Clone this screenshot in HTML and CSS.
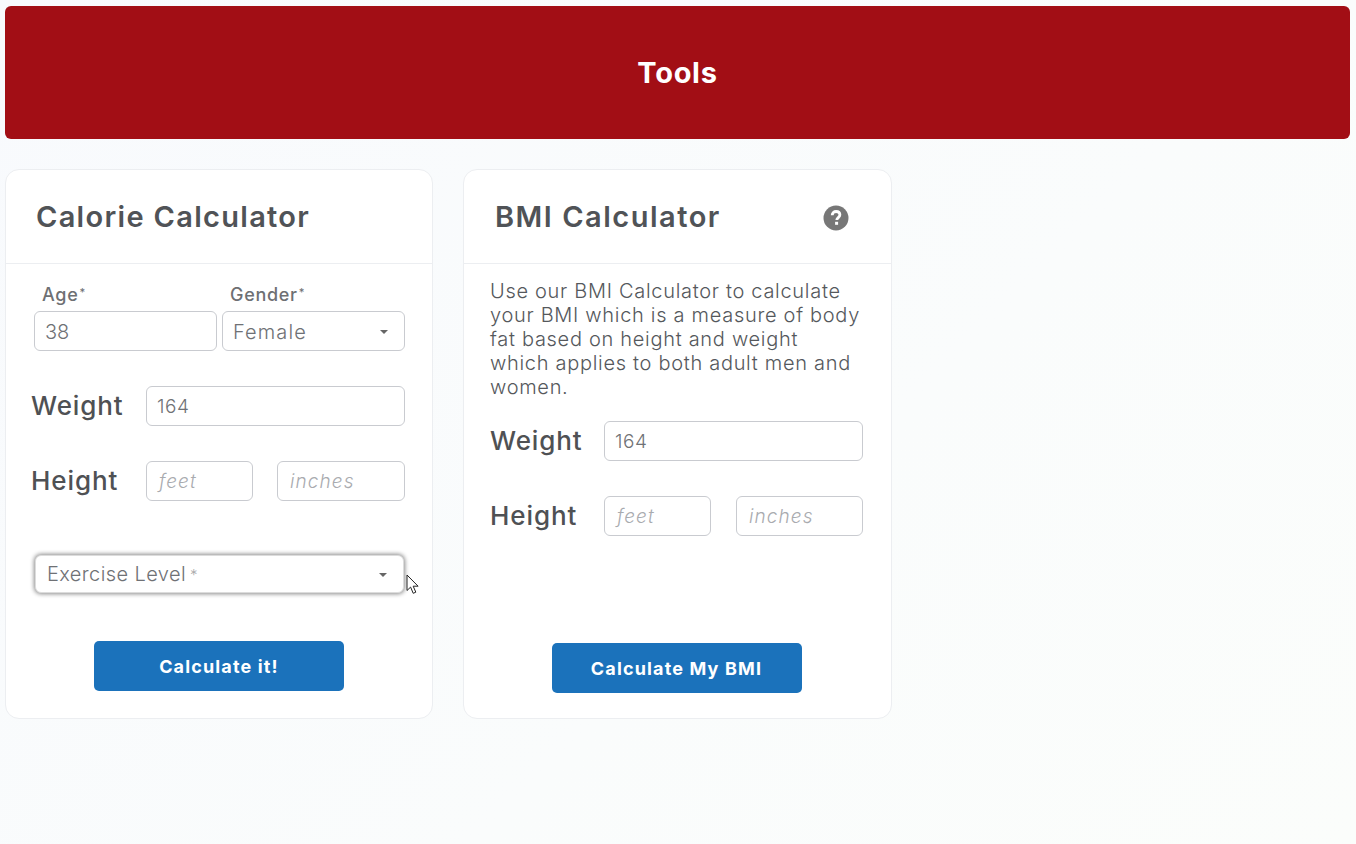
FILE: index.html
```html
<!DOCTYPE html>
<html lang="en">
<head>
<meta charset="utf-8">
<title>Tools</title>
<link rel="stylesheet" href="styles.css">
</head>
<body>
<header class="banner"><h1>Tools</h1></header>
<main class="cards">
  <section class="card calorie">
    <div class="card-head"><h2>Calorie Calculator</h2></div>
    <div class="card-body">
      <div class="pair">
        <div class="pair-col">
          <label class="small-label">Age<span class="req">*</span></label>
          <div class="field">38</div>
        </div>
        <div class="pair-col">
          <label class="small-label">Gender<span class="req">*</span></label>
          <div class="field select wide-text">Female<span class="caret"></span></div>
        </div>
      </div>
      <div class="row weight-row">
        <span class="row-label">Weight</span>
        <div class="field grow small">164</div>
      </div>
      <div class="row height-row">
        <span class="row-label">Height</span>
        <div class="field small ph feet">feet</div>
        <div class="field small ph inches">inches</div>
      </div>
      <div class="field select focus">Exercise Level<span class="req-muted">*</span><span class="caret"></span>
        <svg class="cursor" width="14" height="22" viewBox="0 0 14 22"><path d="M1 1v15.5l3.6-3.4 2.6 6.2 2.6-1.1-2.6-6h4.9z" fill="#fff" stroke="#222" stroke-width="1"/></svg>
      </div>
      <button class="btn" type="button">Calculate it!</button>
    </div>
  </section>
  <section class="card bmi">
    <div class="card-head">
      <h2>BMI Calculator</h2>
      <svg class="help" width="26" height="26" viewBox="0 0 26 26"><circle cx="13" cy="13" r="12.5" fill="#777"/><path d="M9.2 10.2c0-2.3 1.700-3.700 3.900-3.700s3.800 1.300 3.800 3.300c0 2.700-3.100 2.800-3.100 5.200" fill="none" stroke="#fff" stroke-width="2.800"/><rect x="12.100" y="16.800" width="3" height="3" fill="#fff"/></svg>
    </div>
    <div class="card-body">
      <p class="intro">Use our BMI Calculator to calculate your BMI which is a measure of body fat based on height and weight which applies to both adult men and women.</p>
      <div class="row weight-row">
        <span class="row-label">Weight</span>
        <div class="field grow small">164</div>
      </div>
      <div class="row height-row">
        <span class="row-label">Height</span>
        <div class="field small ph feet">feet</div>
        <div class="field small ph inches">inches</div>
      </div>
      <button class="btn" type="button">Calculate My BMI</button>
    </div>
  </section>
</main>
</body>
</html>
```
FILE: styles.css
```css
* { box-sizing: border-box; }
html, body { height: 100%; }
body {
  margin: 0;
  padding: 6px 6px 0 5px;
  overflow: hidden;
  background: linear-gradient(135deg, #f8fafd 0%, #fafcfc 60%, #fbfdfb 100%);
  color: #4f5256;
  font-family: "Inter", "Liberation Sans", sans-serif;
}
.banner {
  height: 133px;
  background: #a20e15;
  border-radius: 6px;
  display: flex;
  align-items: center;
  justify-content: center;
}
.banner h1 {
  margin: 0;
  color: #fff;
  font-size: 29px;
  font-weight: 700;
  letter-spacing: 0.7px;
}
.cards {
  display: flex;
  gap: 30px;
  margin-top: 30px;
}
.card {
  width: 428px;
  height: 550px;
  background: #fff;
  border: 1px solid #eceef1;
  border-radius: 14px;
  display: flex;
  flex-direction: column;
}
.bmi { width: 429px; }
.card-head {
  height: 94px;
  flex: none;
  border-bottom: 1px solid #eceef1;
  display: flex;
  align-items: center;
  justify-content: space-between;
  padding: 0 42px 0 30px;
}
.bmi .card-head { padding-left: 31px; }
.card-head h2 {
  margin: 0;
  font-size: 29px;
  font-weight: 600;
  color: #505357;
  letter-spacing: 1.3px;
}
.bmi .card-head h2 { letter-spacing: 1.5px; }
.help { flex: none; margin-top: 2px; }
.card-body {
  flex: 1;
  display: flex;
  flex-direction: column;
  min-height: 0;
}
.calorie .card-body { padding: 19px 27px 27px 25px; }
.bmi .card-body { padding: 15px 28px 25px 26px; }
.pair { display: flex; gap: 5px; margin: 0 0 35px 3px; }
.pair-col { width: 183px; }
.small-label {
  display: block;
  margin-left: 8px;
  height: 28px;
  font-size: 18px;
  line-height: 18px;
  font-weight: 500;
  color: #6e7073;
  letter-spacing: 0.7px;
}
.req { font-size: 11px; vertical-align: 5px; margin-left: 1px; }
.req-muted { font-size: 15px; color: #aaa; margin-left: 4px; vertical-align: 1px; }
.field {
  height: 40px;
  border: 1px solid #c9cbd0;
  border-radius: 6px;
  background: #fff;
  padding: 1px 10px 0;
  display: flex;
  align-items: center;
  font-size: 20px;
  font-weight: 300;
  color: #6f7175;
  position: relative;
}
.wide-text { letter-spacing: 1.1px; }
.field.small { font-size: 19px; padding-top: 0; letter-spacing: 0.6px; }
.field.ph { color: #a9abaf; font-style: italic; letter-spacing: 1.1px; }
.field.grow { flex: 1; }
.select { justify-content: flex-start; }
.caret {
  position: absolute;
  right: 16px;
  top: 50%;
  margin-top: -1px;
  border-left: 4px solid transparent;
  border-right: 4px solid transparent;
  border-top: 4px solid #666;
}
.focus {
  width: 369px;
  height: 38px;
  margin: 54px 0 0 4px;
  padding: 0 11px;
  border-color: #dcdcdc;
  box-shadow: 0 0 4px 1px #8c8c8c;
  flex: none;
  letter-spacing: 0.4px;
}
.cursor { position: absolute; left: 370px; top: 18px; }
.row { display: flex; align-items: center; height: 40px; }
.row-label {
  font-size: 26px;
  font-weight: 500;
  color: #4f5154;
  flex: none;
  padding-bottom: 2px;
  letter-spacing: 0.9px;
}
.row + .row { margin-top: 35px; }
.calorie .row-label { width: 115px; }
.bmi .row-label { width: 114px; }
.calorie .feet { width: 107px; margin-right: 24px; padding-left: 12px; }
.calorie .inches { width: 128px; padding-left: 12px; }
.bmi .feet { width: 107px; margin-right: 25px; padding-left: 12px; }
.bmi .inches { width: 127px; padding-left: 12px; }
.intro {
  margin: 0 0 22px;
  max-width: 371px;
  font-size: 20px;
  line-height: 24px;
  font-weight: 300;
  color: #55585c;
  letter-spacing: 0.7px;
}
.btn {
  width: 250px;
  height: 50px;
  flex: none;
  margin: auto auto 0;
  background: #1b72bb;
  border: 0;
  border-radius: 5px;
  color: #fff;
  font-family: inherit;
  font-size: 18px;
  font-weight: 700;
  letter-spacing: 1.15px;
}
.calorie .btn { margin-left: 63px; }
```
